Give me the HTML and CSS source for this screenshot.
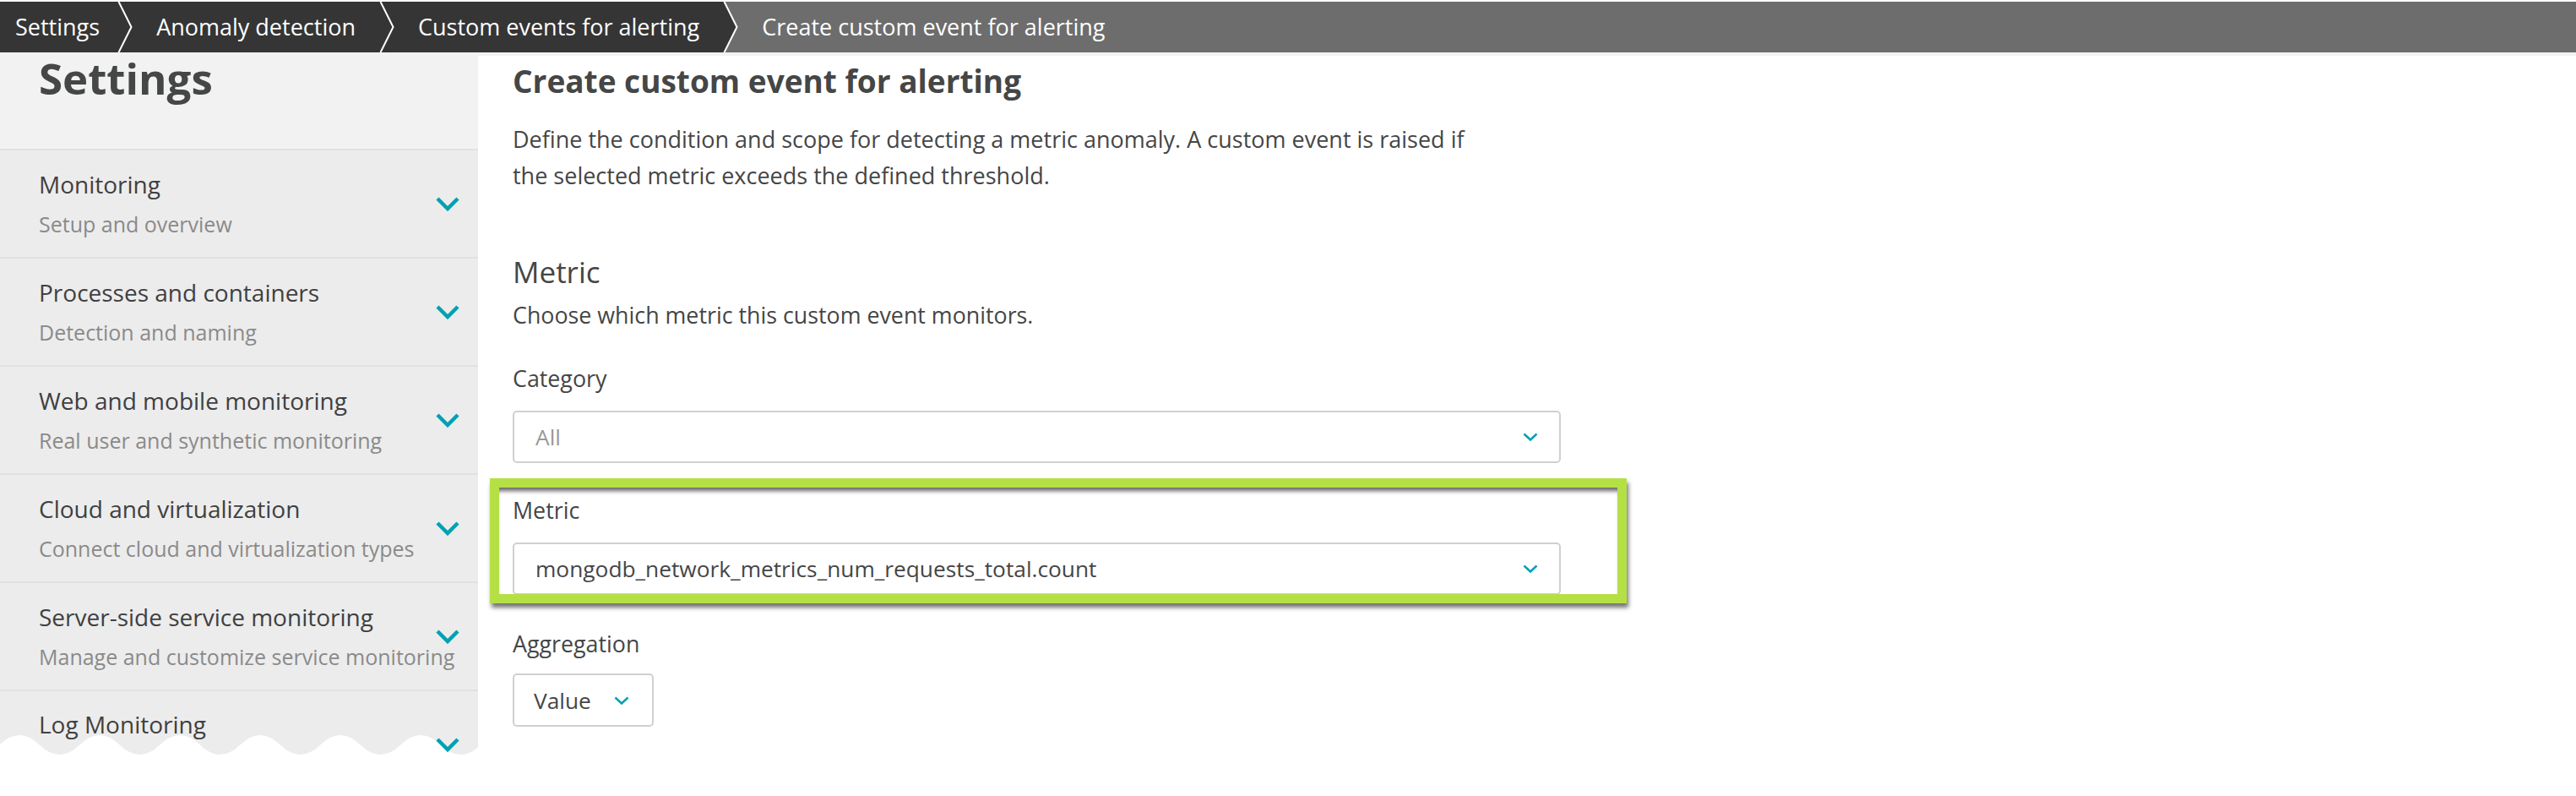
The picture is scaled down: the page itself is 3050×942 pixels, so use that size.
FILE: index.html
```html
<!DOCTYPE html>
<html lang="en">
<head>
<meta charset="utf-8">
<title>Create custom event for alerting</title>
<link rel="stylesheet" href="styles.css">
</head>
<body>
<div class="page">
  <nav class="crumbs">
    <span class="crumb crumb-first">Settings</span>
    <svg class="sep" viewBox="0 0 20 60" width="20" height="60"><polyline points="1.5,0 16.5,30 1.5,60" fill="none" stroke="#fff" stroke-width="2"/></svg>
    <span class="crumb">Anomaly detection</span>
    <svg class="sep" viewBox="0 0 20 60" width="20" height="60"><polyline points="1.5,0 16.5,30 1.5,60" fill="none" stroke="#fff" stroke-width="2"/></svg>
    <span class="crumb">Custom events for alerting</span>
    <svg class="sep" viewBox="0 0 20 60" width="20" height="60"><polygon points="1.5,0 20,0 20,60 1.5,60 16.5,30" fill="#6d6d6d"/><polyline points="1.5,0 16.5,30 1.5,60" fill="none" stroke="#fff" stroke-width="2"/></svg>
    <span class="crumb crumb-current">Create custom event for alerting</span>
  </nav>
  <div class="strip"></div>
  <div class="layout">
    <aside class="sidebar">
      <div class="side-head"><h1 class="side-heading">Settings</h1></div>
      <ul class="side-list">
        <li class="side-item">
          <div class="side-text"><div class="side-title">Monitoring</div><div class="side-sub">Setup and overview</div></div>
          <svg class="chev" viewBox="0 0 28 17" width="28" height="17"><polyline points="2,2 14,14 26,2" fill="none" stroke="#00a1b2" stroke-width="4.5"/></svg>
        </li>
        <li class="side-item">
          <div class="side-text"><div class="side-title">Processes and containers</div><div class="side-sub">Detection and naming</div></div>
          <svg class="chev" viewBox="0 0 28 17" width="28" height="17"><polyline points="2,2 14,14 26,2" fill="none" stroke="#00a1b2" stroke-width="4.5"/></svg>
        </li>
        <li class="side-item">
          <div class="side-text"><div class="side-title">Web and mobile monitoring</div><div class="side-sub">Real user and synthetic monitoring</div></div>
          <svg class="chev" viewBox="0 0 28 17" width="28" height="17"><polyline points="2,2 14,14 26,2" fill="none" stroke="#00a1b2" stroke-width="4.5"/></svg>
        </li>
        <li class="side-item">
          <div class="side-text"><div class="side-title">Cloud and virtualization</div><div class="side-sub">Connect cloud and virtualization types</div></div>
          <svg class="chev" viewBox="0 0 28 17" width="28" height="17"><polyline points="2,2 14,14 26,2" fill="none" stroke="#00a1b2" stroke-width="4.5"/></svg>
        </li>
        <li class="side-item">
          <div class="side-text"><div class="side-title">Server-side service monitoring</div><div class="side-sub">Manage and customize service monitoring</div></div>
          <svg class="chev" viewBox="0 0 28 17" width="28" height="17"><polyline points="2,2 14,14 26,2" fill="none" stroke="#00a1b2" stroke-width="4.5"/></svg>
        </li>
        <li class="side-item side-item-last">
          <div class="side-text"><div class="side-title">Log Monitoring</div></div>
          <svg class="chev" viewBox="0 0 28 17" width="28" height="17"><polyline points="2,2 14,14 26,2" fill="none" stroke="#00a1b2" stroke-width="4.5"/></svg>
        </li>
      </ul>
      <svg class="torn" viewBox="0 0 566 26" width="566" height="26" preserveAspectRatio="none"><path d="M -0.75 14.5 Q 23 -8.5 46.75 14.5 T 94.25 14.5 T 141.75 14.5 T 189.25 14.5 T 236.75 14.5 T 284.25 14.5 T 331.75 14.5 T 379.25 14.5 T 426.75 14.5 T 474.25 14.5 T 521.75 14.5 T 569.25 14.5 L 570 30 L -2 30 Z" fill="#fff"/></svg>
    </aside>
    <main class="main">
      <h2 class="page-title">Create custom event for alerting</h2>
      <p class="intro">Define the condition and scope for detecting a metric anomaly. A custom event is raised if the selected metric exceeds the defined threshold.</p>
      <h3 class="section-title">Metric</h3>
      <p class="section-sub">Choose which metric this custom event monitors.</p>
      <div class="field field-category">
        <div class="field-label">Category</div>
        <div class="select">
          <span class="select-value placeholder">All</span>
          <svg class="select-chev" viewBox="0 0 18 10" width="18" height="10"><polyline points="1.5,1.5 9,8.5 16.5,1.5" fill="none" stroke="#00a1b2" stroke-width="2.5"/></svg>
        </div>
      </div>
      <div class="highlight">
        <div class="field-label">Metric</div>
        <div class="select">
          <span class="select-value">mongodb_network_metrics_num_requests_total.count</span>
          <svg class="select-chev" viewBox="0 0 18 10" width="18" height="10"><polyline points="1.5,1.5 9,8.5 16.5,1.5" fill="none" stroke="#00a1b2" stroke-width="2.5"/></svg>
        </div>
      </div>
      <div class="field field-agg">
        <div class="field-label">Aggregation</div>
        <div class="select select-small">
          <span class="select-value">Value</span>
          <svg class="select-chev" viewBox="0 0 18 10" width="18" height="10"><polyline points="1.5,1.5 9,8.5 16.5,1.5" fill="none" stroke="#00a1b2" stroke-width="2.5"/></svg>
        </div>
      </div>
    </main>
  </div>
</div>
</body>
</html>
```
FILE: styles.css
```css
* { box-sizing: border-box; }
html, body { margin: 0; padding: 0; background: #fff; }
body {
  font-family: "Open Sans", "Noto Sans", sans-serif;
  color: #454646;
}
.page { padding-top: 2px; }

/* breadcrumb */
.crumbs {
  display: flex;
  align-items: stretch;
  height: 60px;
  background: #353535;
  color: #fff;
  font-size: 27px;
  line-height: 60px;
  white-space: nowrap;
}
.crumb { padding: 0 28px 0 26px; }
.crumb-first { padding-left: 18px; padding-right: 21px; }
.crumb-current { flex: 1; background: #6d6d6d; padding-left: 26px; }
.sep { display: block; flex: none; }

.strip { height: 4px; background: #f2f2f2; }

.layout { display: flex; align-items: flex-start; }

/* sidebar */
.sidebar {
  position: relative;
  flex: none;
  width: 566px;
  height: 827px;
  background: #ececec;
}
.side-head {
  height: 110px;
  background: #f2f2f2;
  padding-left: 46px;
}
.side-heading {
  margin: 0;
  font-size: 51px;
  line-height: 52px;
  font-weight: 700;
  color: #454646;
}
.side-list {
  list-style: none;
  margin: 0;
  padding: 0;
  height: 717px;
  overflow: hidden;
}
.side-item {
  display: flex;
  align-items: center;
  height: 128px;
  border-top: 2px solid #e1e1e1;
  padding: 0 22px 0 46px;
}
.side-text { flex: 1; min-width: 0; white-space: nowrap; }
.side-item-last { align-items: flex-start; }
.side-item-last .side-text { padding-top: 21px; }
.side-item-last .chev { margin-top: 55px; }
.side-title { font-size: 28px; line-height: 36px; color: #404040; }
.side-sub { font-size: 25px; line-height: 34px; color: #8a8a8a; margin-top: 12px; }
.chev { display: block; flex: none; position: relative; z-index: 2; }
.torn { position: absolute; left: 0; bottom: 0; display: block; z-index: 1; }

/* main */
.main {
  flex: 1;
  min-height: 876px;
  background: #fff;
  padding: 8px 0 0 41px;
}
.page-title {
  margin: 0;
  font-size: 37px;
  line-height: 44px;
  font-weight: 700;
  color: #454646;
}
.intro {
  margin: 25px 0 0;
  max-width: 1150px;
  font-size: 27px;
  line-height: 43px;
}
.section-title {
  margin: 70px 0 0;
  font-size: 35px;
  line-height: 46px;
  font-weight: 400;
}
.section-sub {
  margin: 11px 0 0;
  font-size: 26.8px;
  line-height: 34px;
}
.field-category { margin-top: 41px; }
.field-label { font-size: 26.8px; line-height: 34px; margin-bottom: 21px; }
.select {
  display: flex;
  align-items: center;
  justify-content: space-between;
  width: 1241px;
  height: 62px;
  padding: 0 25px;
  border: 2px solid #d0d0d0;
  border-radius: 5px;
  background: #fff;
  font-size: 26.3px;
  color: #454646;
}
.placeholder { color: #999; }
.select-chev { display: block; flex: none; }

.highlight {
  margin: 18px 0 0 -27px;
  width: 1346px;
  height: 148px;
  overflow: hidden;
  border: 11px solid #b5e045;
  padding: 10px 0 0 16px;
  background: #fff;
  box-shadow: 2px 5px 5px rgba(0, 0, 0, 0.55), inset 0 7px 5px -3px rgba(0, 0, 0, 0.6);
}
.field-agg { margin-top: 31px; }
.field-agg .field-label { margin-bottom: 18px; }
.select-small {
  display: inline-flex;
  width: 167px;
  height: 63px;
  padding: 0 23px;
  justify-content: flex-start;
  gap: 27px;
}
```
